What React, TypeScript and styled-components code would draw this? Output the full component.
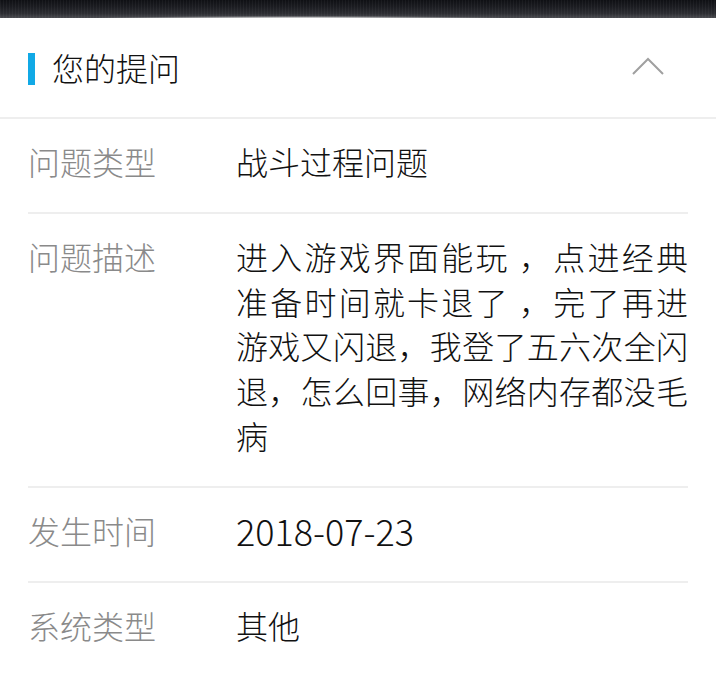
import styled, { createGlobalStyle } from "styled-components";

const GlobalStyle = createGlobalStyle`
  html, body {
    margin: 0;
    padding: 0;
    background: #ffffff;
    overflow: hidden;
  }
  body {
    font-family: "Noto Sans CJK SC", "Noto Sans", sans-serif;
    font-weight: 300;
  }
`;

const Page = styled.div`
  width: 716px;
  height: 673px;
  overflow: hidden;
  background: #ffffff;
`;

const TopStrip = styled.div`
  height: 18px;
  background:
    radial-gradient(ellipse 210px 2px at 300px 100%, rgba(255, 255, 255, 0.85), rgba(255, 255, 255, 0) 100%),
    repeating-linear-gradient(90deg, rgba(255, 255, 255, 0.04) 0 1px, rgba(0, 0, 0, 0) 1px 3px),
    linear-gradient(to bottom, #0f1014 0%, #1c1d22 40%, #2c2d32 75%, #4a4b50 100%);
`;

const Header = styled.div`
  height: 99px;
  padding: 0 52px 0 28px;
  display: flex;
  align-items: center;
  justify-content: space-between;
  border-bottom: 2px solid #eeeeee;
`;

const TitleWrap = styled.div`
  display: flex;
  align-items: center;
  gap: 17px;
`;

const Accent = styled.span`
  width: 7px;
  height: 32px;
  margin-top: 3px;
  background: #11a9e6;
`;

const Title = styled.h2`
  margin: 0;
  font-size: 32px;
  font-weight: 300;
  line-height: 45px;
  color: #111111;
`;

const Chevron = styled.svg`
  width: 32px;
  height: 18px;
  margin-bottom: 4px;
`;

const List = styled.div`
  padding: 0 28px;
`;

const Row = styled.div`
  display: flex;
  align-items: flex-start;
  padding: 20px 0 28px;
  border-bottom: 2px solid #eeeeee;
  &:last-child {
    border-bottom: none;
  }
`;

const Label = styled.div`
  width: 208px;
  flex-shrink: 0;
  font-size: 32px;
  line-height: 44.8px;
  color: #8a8a8a;
`;

const Value = styled.div<{ $numeric?: boolean }>`
  flex: 1;
  font-size: ${(p) => (p.$numeric ? "36px" : "32px")};
  line-height: 44.8px;
  color: #111111;
  text-align: justify;
  word-break: break-all;
`;

const rows = [
  { label: "问题类型", value: "战斗过程问题" },
  {
    label: "问题描述",
    value:
      "进入游戏界面能玩 ，点进经典准备时间就卡退了 ，完了再进游戏又闪退，我登了五六次全闪退，怎么回事，网络内存都没毛病",
  },
  { label: "发生时间", value: "2018-07-23", numeric: true },
  { label: "系统类型", value: "其他" },
];

function App() {
  return (
    <Page>
      <GlobalStyle />
      <TopStrip />
      <Header>
        <TitleWrap>
          <Accent />
          <Title>您的提问</Title>
        </TitleWrap>
        <Chevron viewBox="0 0 32 18">
          <polyline
            points="1,17 16,2 31,17"
            fill="none"
            stroke="#a0a0a0"
            strokeWidth="2"
          />
        </Chevron>
      </Header>
      <List>
        {rows.map((row) => (
          <Row key={row.label}>
            <Label>{row.label}</Label>
            <Value $numeric={row.numeric}>{row.value}</Value>
          </Row>
        ))}
      </List>
    </Page>
  );
}

export default App;
